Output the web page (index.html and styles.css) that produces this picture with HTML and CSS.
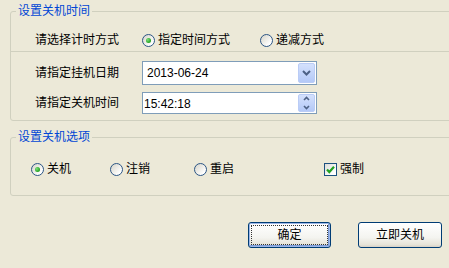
FILE: index.html
```html
<!DOCTYPE html>
<html>
<head>
<meta charset="utf-8">
<link rel="stylesheet" href="styles.css">
</head>
<body>
<div class="dialog">
  <fieldset class="group group-time">
    <legend>设置关机时间</legend>
    <div class="row mode-row">
      <span class="label">请选择计时方式</span>
      <label class="radio"><span class="dot checked"></span>指定时间方式</label>
      <label class="radio radio-gap"><span class="dot"></span>递减方式</label>
    </div>
    <div class="sep"></div>
    <div class="row field-row date-row">
      <span class="label">请指定挂机日期</span>
      <div class="combo">
        <span class="val">2013-06-24</span>
        <span class="cbtn">
          <svg width="9" height="6" viewBox="0 0 9 6"><path d="M1 1 L4.5 4.5 L8 1" fill="none" stroke="#4D6185" stroke-width="2"/></svg>
        </span>
      </div>
    </div>
    <div class="row field-row time-row">
      <span class="label">请指定关机时间</span>
      <div class="combo spin">
        <span class="val">15:42:18</span>
        <span class="cbtn sbtn">
          <svg width="7" height="16" viewBox="0 0 7 16"><path d="M1 5 L3.5 2.5 L6 5" fill="none" stroke="#4D6185" stroke-width="1.6"/><path d="M1 11 L3.5 13.5 L6 11" fill="none" stroke="#4D6185" stroke-width="1.6"/></svg>
        </span>
      </div>
    </div>
  </fieldset>

  <fieldset class="group group-opt">
    <legend>设置关机选项</legend>
    <div class="row opt-row">
      <label class="radio opt opt-1"><span class="dot checked"></span>关机</label>
      <label class="radio opt opt-2"><span class="dot"></span>注销</label>
      <label class="radio opt opt-3"><span class="dot"></span>重启</label>
      <label class="radio opt"><span class="check"><svg width="11" height="11" viewBox="0 0 11 11"><path d="M2 5.5 L4.3 8 L9 2.8" fill="none" stroke="#21A121" stroke-width="2.2"/></svg></span>强制</label>
    </div>
  </fieldset>

  <div class="buttons">
    <button class="btn btn-default">确定</button>
    <button class="btn">立即关机</button>
  </div>
</div>
</body>
</html>
```

FILE: styles.css
```css
html, body {
  margin: 0;
  padding: 0;
}
body {
  width: 449px;
  height: 268px;
  overflow: hidden;
  background: #ECE9D8;
  font-family: "Liberation Sans", "Noto Sans CJK SC", sans-serif;
  font-size: 12px;
  line-height: 14px;
  color: #000;
}
.dialog {
  width: 449px;
}
.group {
  margin: 4px -20px 0 10px;
  padding: 0;
  border: 1px solid #D0D0BF;
  border-radius: 3px;
  min-width: 0;
}
.group legend {
  margin-left: 5px;
  padding: 0 2px;
  color: #0046D5;
  font-size: 12px;
  line-height: 14px;
}
.group-opt {
  margin-top: 9px;
}
.row {
  display: flex;
  align-items: center;
}
.label {
  width: 107px;
  flex: none;
}
.mode-row {
  height: 14px;
  padding: 15px 0 4px 24px;
}
.sep {
  height: 0;
  border-top: 1px solid #D0D0BF;
}
.field-row {
  padding-left: 24px;
}
.date-row {
  margin-top: 9px;
}
.time-row {
  margin-top: 7px;
  margin-bottom: 6px;
}
.radio {
  display: flex;
  align-items: center;
  white-space: nowrap;
}
.radio-gap {
  margin-left: 30px;
}
.dot {
  width: 13px;
  height: 13px;
  box-sizing: border-box;
  border: 1px solid #2B5585;
  border-radius: 50%;
  background: linear-gradient(135deg, #D6D4C8, #FFFFFF 80%);
  margin-right: 3px;
  display: flex;
  align-items: center;
  justify-content: center;
  flex: none;
}
.dot.checked::after {
  content: "";
  display: block;
  width: 5px;
  height: 5px;
  border-radius: 50%;
  background: radial-gradient(circle at 35% 35%, #7EE07A, #21A121 70%);
}
.check {
  width: 13px;
  height: 13px;
  box-sizing: border-box;
  border: 1px solid #1C5180;
  background: linear-gradient(135deg, #DCDCD7, #FFFFFF 80%);
  margin-right: 3px;
  display: flex;
  align-items: center;
  justify-content: center;
  flex: none;
}
.check svg {
  display: block;
}
.combo {
  width: 175px;
  height: 24px;
  box-sizing: border-box;
  border: 1px solid #7F9DB9;
  background: #FFFFFF;
  display: flex;
  align-items: center;
  padding: 0 1px 0 4px;
}
.combo .val {
  flex: 1;
}
.cbtn {
  width: 17px;
  height: 20px;
  box-sizing: border-box;
  border: 1px solid #BACCF6;
  border-radius: 2px;
  background: linear-gradient(#D4E1FD, #B4C9F7);
  display: flex;
  align-items: center;
  justify-content: center;
  flex: none;
}
.cbtn svg {
  display: block;
}
.spin {
  height: 22px;
  padding-left: 1px;
  align-items: flex-end;
  padding-bottom: 1px;
}
.spin .val {
  align-self: center;
  padding-top: 2px;
}
.sbtn {
  height: 18px;
}
.opt-row {
  height: 14px;
  padding: 18px 0 19px 20px;
}
.opt-1 {
  width: 79px;
}
.opt-2 {
  width: 84px;
}
.opt-3 {
  width: 130px;
}
.buttons {
  display: flex;
  justify-content: flex-end;
  gap: 27px;
  padding-right: 7px;
  margin-top: 26px;
}
.btn {
  width: 84px;
  height: 26px;
  box-sizing: border-box;
  border: 1px solid #003C74;
  border-radius: 3px;
  background: linear-gradient(#FFFFFF, #F4F4F0 60%, #E6E3D8 90%, #D6D0C5);
  font-family: "Liberation Sans", "Noto Sans CJK SC", sans-serif;
  font-size: 12px;
  line-height: 14px;
  color: #000;
  padding: 0;
}
.btn-default {
  width: 83px;
  box-shadow: inset 0 0 0 1px #9DB7E8, inset -1px -1px 0 1px #7A9BD8;
  outline: 1px dotted #333;
  outline-offset: -4px;
}
```
